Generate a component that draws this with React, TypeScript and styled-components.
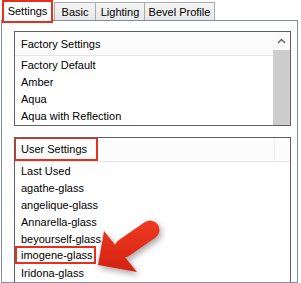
import React from 'react'
import styled, { createGlobalStyle } from 'styled-components'

const GlobalStyle = createGlobalStyle`
  html, body {
    margin: 0;
    padding: 0;
    background: #ffffff;
  }
  body {
    font-family: "Liberation Sans", Arial, sans-serif;
    font-size: 11px;
    color: #000;
  }
`

const RED = '#e2321f'

const Frame = styled.div`
  position: relative;
  width: 301px;
  height: 283px;
  overflow: hidden;
  background: #fff;
`

const TabStrip = styled.div`
  position: relative;
  z-index: 2;
  display: flex;
  align-items: flex-start;
  height: 20px;
  padding-left: 2px;
`

const Tab = styled.div<{ $w: number; $active?: boolean }>`
  box-sizing: border-box;
  width: ${(p) => p.$w}px;
  height: ${(p) => (p.$active ? 23 : 18)}px;
  margin-top: ${(p) => (p.$active ? 0 : 2)}px;
  margin-right: ${(p) => (p.$active ? 1 : -1)}px;
  display: flex;
  align-items: center;
  justify-content: center;
  padding-bottom: ${(p) => (p.$active ? 2 : 0)}px;
  background: ${(p) => (p.$active ? '#fff' : 'linear-gradient(#f4f4f4, #e8e8e8)')};
  border: ${(p) => (p.$active ? `2px solid ${RED}` : '1px solid #acacac')};
  border-bottom: ${(p) => (p.$active ? `2px solid ${RED}` : 'none')};
  white-space: nowrap;
`

const Page = styled.div`
  box-sizing: border-box;
  width: 297px;
  height: 263px;
  margin-left: 1px;
  border: 1px solid #838c99;
  padding: 10px 0 0 12px;
  overflow: hidden;
  display: flex;
  flex-direction: column;
  gap: 11px;
`

const ListBox = styled.div<{ $h: number }>`
  box-sizing: border-box;
  width: 277px;
  height: ${(p) => p.$h}px;
  flex: none;
  border: 1px solid #5f5f5f;
  display: flex;
  overflow: hidden;
  position: relative;
`

const ListCol = styled.div`
  flex: 1;
  display: flex;
  flex-direction: column;
`

const Header = styled.div`
  display: flex;
  height: 23px;
  background: #fcfcfc;
  border-bottom: 1px solid #e5e5e5;
  flex: none;
`

const HeaderCell = styled.div`
  flex: 1;
  display: flex;
  align-items: center;
  padding-left: 6px;
`

const HeaderStub = styled.div`
  width: 15px;
  border-left: 1px solid #ececec;
`

const MarkedHeader = styled.div`
  box-sizing: border-box;
  width: 84px;
  height: 24px;
  margin: -1px 0 0 -1px;
  border: 2px solid ${RED};
  padding-left: 5px;
  display: flex;
  align-items: center;
`

const Row = styled.div`
  height: 17px;
  display: flex;
  align-items: center;
  padding-left: 6px;
  white-space: nowrap;
  flex: none;
`

const MarkedRow = styled(Row)`
  padding-left: 0;
`

const MarkedLabel = styled.div`
  box-sizing: border-box;
  width: 81px;
  height: 18px;
  margin-top: -2px;
  border: 2px solid ${RED};
  padding-left: 4px;
  display: flex;
  align-items: center;
`

const ScrollBar = styled.div`
  width: 17px;
  display: flex;
  flex-direction: column;
  background: #f0f0f0;
`

const ScrollButton = styled.div`
  height: 18px;
  display: flex;
  align-items: center;
  justify-content: center;
  background: #fafafa;
`

const Thumb = styled.div`
  flex: 1;
  background: #cdcdcd;
`

const ArrowLayer = styled.svg`
  position: absolute;
  left: 0;
  top: 0;
  width: 301px;
  height: 283px;
  pointer-events: none;
  z-index: 3;
`

const factory = ['Factory Default', 'Amber', 'Aqua', 'Aqua with Reflection']
const user = [
  'Last Used',
  'agathe-glass',
  'angelique-glass',
  'Annarella-glass',
  'beyourself-glass',
  'imogene-glass',
  'Iridona-glass',
]

const tabs = [
  { label: 'Settings', w: 51, active: true },
  { label: 'Basic', w: 42 },
  { label: 'Lighting', w: 50 },
  { label: 'Bevel Profile', w: 71 },
]

const Arrow = () => (
  <ArrowLayer viewBox="0 0 301 283">
    <defs>
      <linearGradient id="arrowFill" x1="0" y1="220" x2="0" y2="272" gradientUnits="userSpaceOnUse">
        <stop offset="0" stopColor="#ee3a22" />
        <stop offset="1" stopColor="#d32312" />
      </linearGradient>
      <filter id="shadow" x="-30%" y="-30%" width="160%" height="160%">
        <feDropShadow dx="2" dy="3" stdDeviation="3" floodColor="#000" floodOpacity="0.35" />
      </filter>
    </defs>
    <g filter="url(#shadow)" fill="url(#arrowFill)" stroke="none">
      <line x1="124" y1="248" x2="150" y2="230" stroke="url(#arrowFill)" strokeWidth="19" strokeLinecap="round" />
      <polygon points="104,231 137,272 98,265" />
    </g>
  </ArrowLayer>
)

export default function App() {
  return (
    <Frame>
      <GlobalStyle />
      <TabStrip>
        {tabs.map((t) => (
          <Tab key={t.label} $w={t.w} $active={t.active}>
            {t.label}
          </Tab>
        ))}
      </TabStrip>
      <Page>
        <ListBox $h={95}>
          <ListCol>
            <Header>
              <HeaderCell>Factory Settings</HeaderCell>
            </Header>
            {factory.map((f) => (
              <Row key={f}>{f}</Row>
            ))}
          </ListCol>
          <ScrollBar>
            <ScrollButton>
              <svg width="9" height="6" viewBox="0 0 9 6">
                <polyline points="1,5 4.5,1.5 8,5" fill="none" stroke="#606060" strokeWidth="1.4" />
              </svg>
            </ScrollButton>
            <Thumb />
          </ScrollBar>
        </ListBox>
        <ListBox $h={146}>
          <ListCol>
            <Header>
              <MarkedHeader>User Settings</MarkedHeader>
              <HeaderCell />
              <HeaderStub />
            </Header>
            {user.map((u) =>
              u === 'imogene-glass' ? (
                <MarkedRow key={u}>
                  <MarkedLabel>{u}</MarkedLabel>
                </MarkedRow>
              ) : (
                <Row key={u}>{u}</Row>
              )
            )}
          </ListCol>
        </ListBox>
      </Page>
      <Arrow />
    </Frame>
  )
}
